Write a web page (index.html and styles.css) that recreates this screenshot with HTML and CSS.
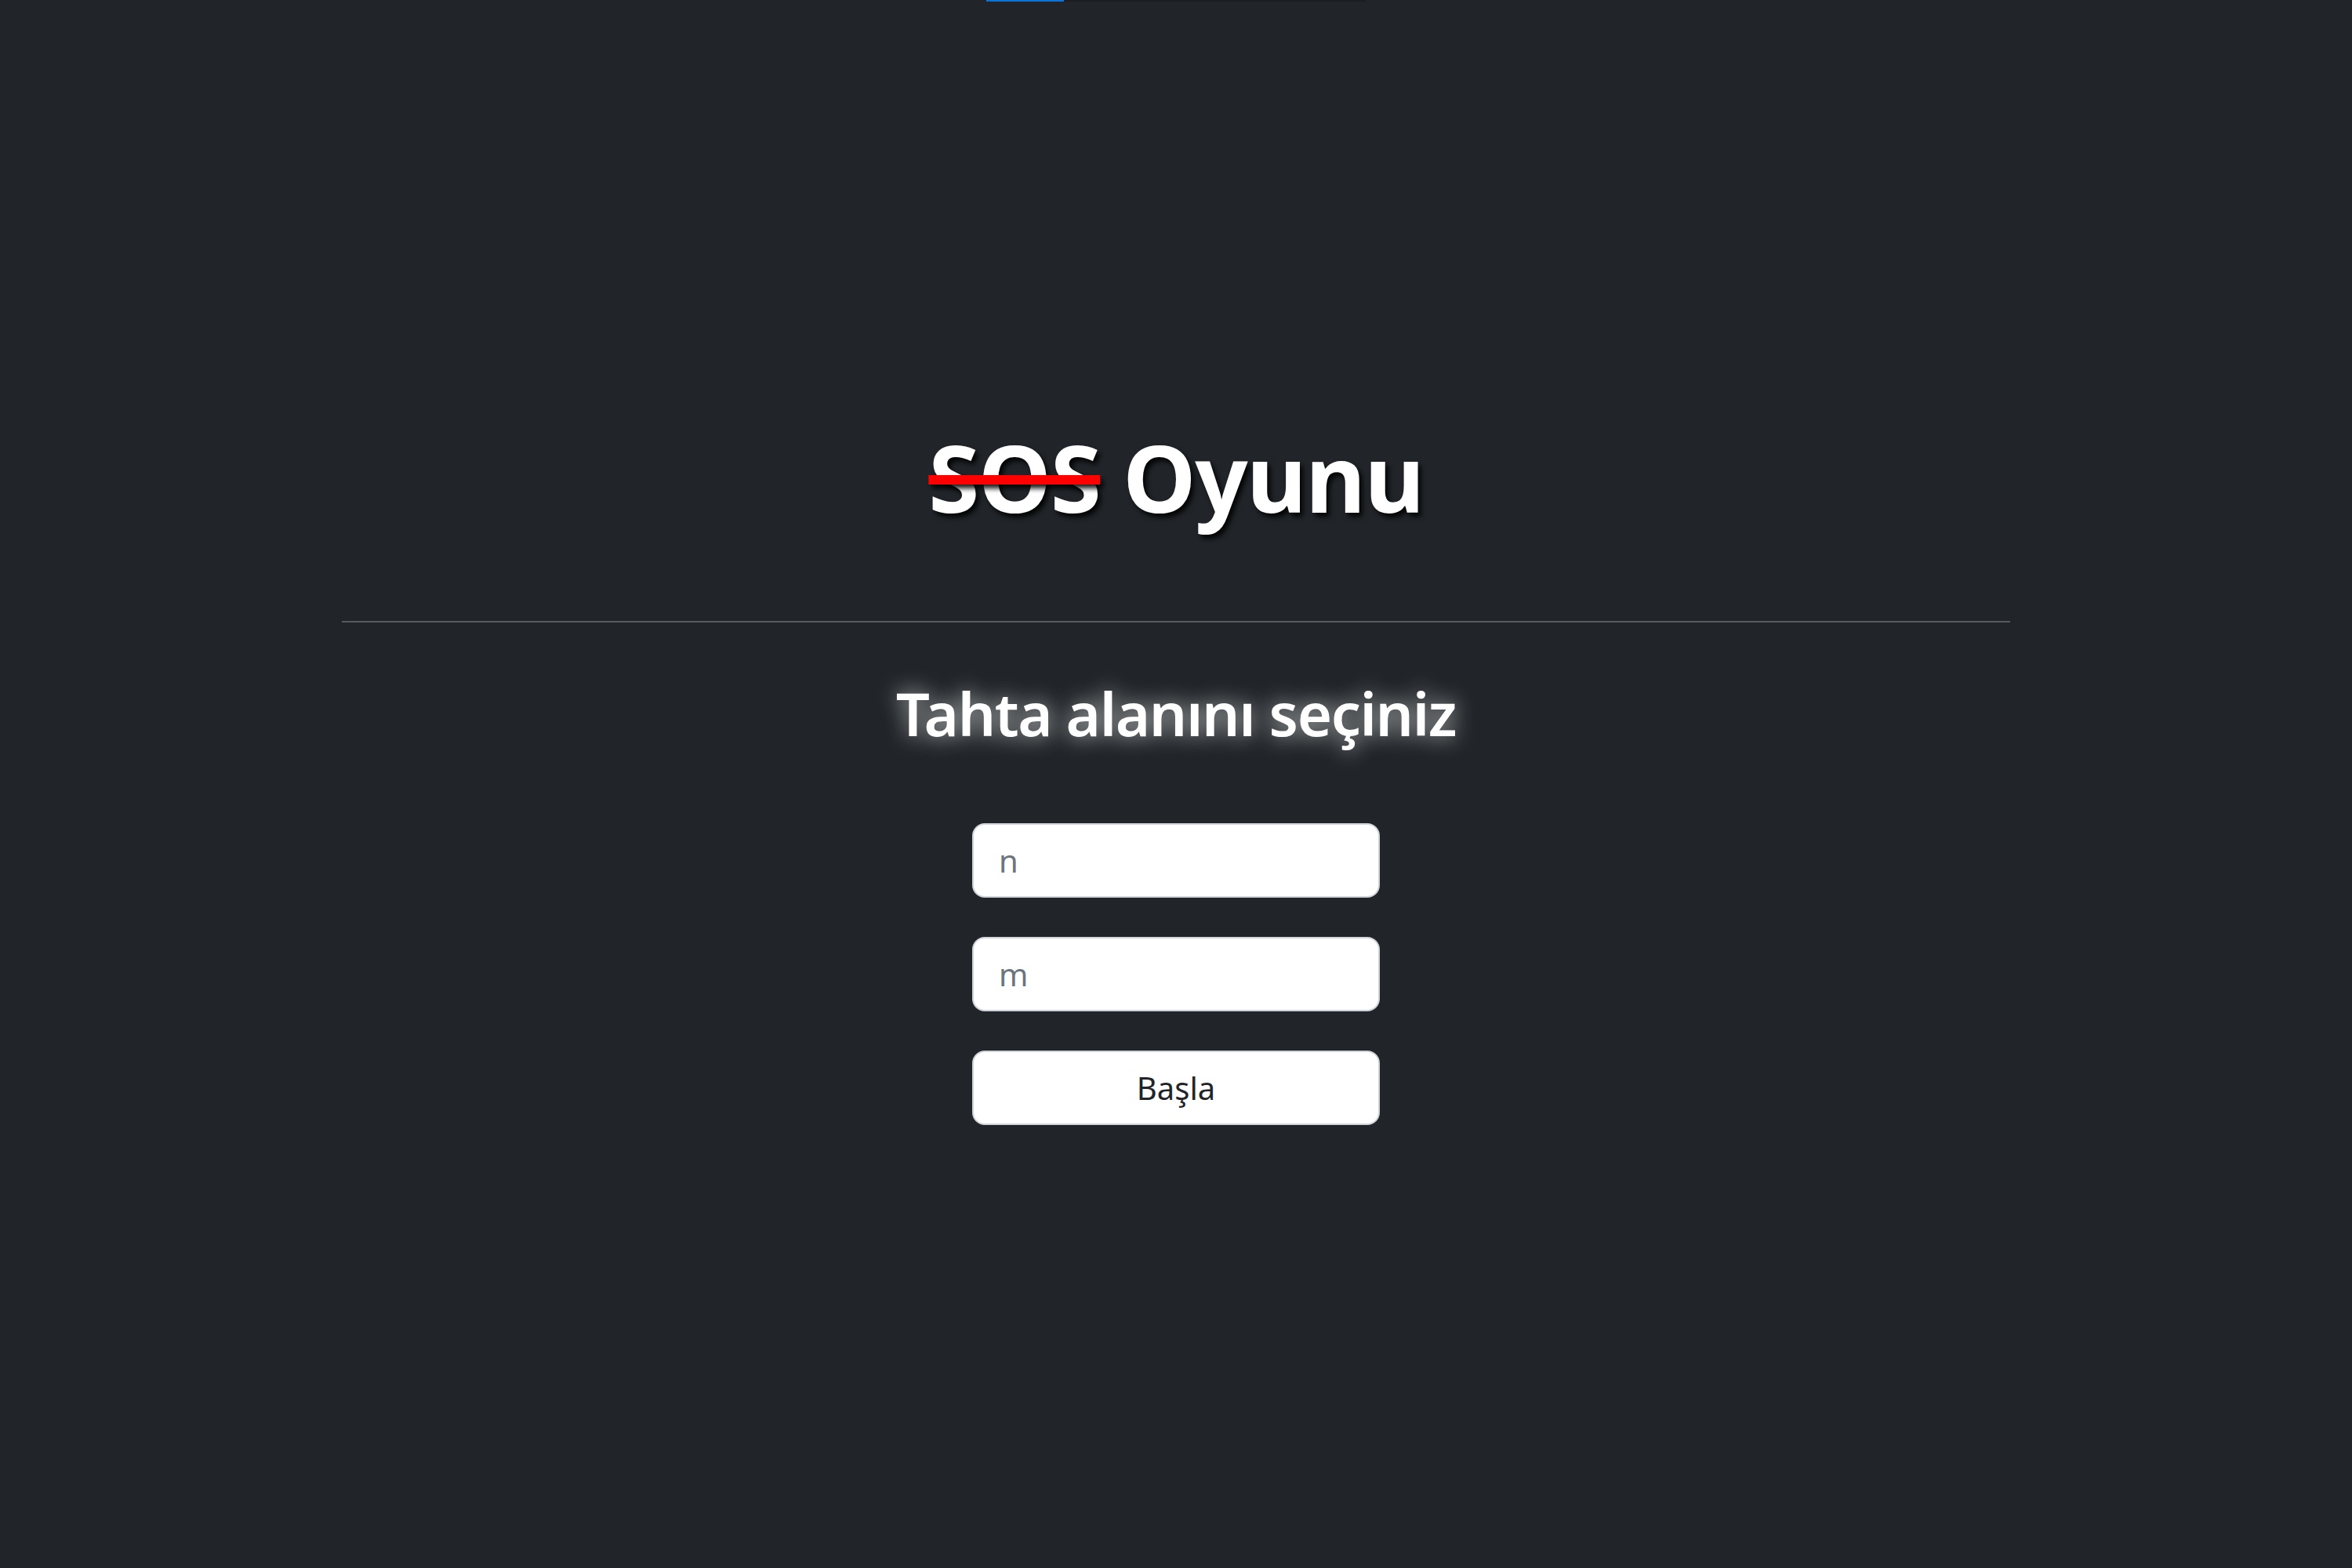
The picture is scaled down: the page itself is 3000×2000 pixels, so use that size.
FILE: index.html
```html
<!DOCTYPE html>
<html lang="tr">
<head>
<meta charset="utf-8">
<title>SOS Oyunu</title>
<link rel="stylesheet" href="styles.css">
</head>
<body>
<div class="page">
  <div class="progress"><div class="progress-bar"></div></div>
  <h1 class="title"><span class="strike">SOS</span> Oyunu</h1>
  <hr class="divider">
  <h2 class="subtitle">Tahta alanını seçiniz</h2>
  <form class="board-form">
    <input class="field" type="text" placeholder="n">
    <input class="field" type="text" placeholder="m">
    <button class="start-btn" type="button">Başla</button>
  </form>
</div>
</body>
</html>
```

FILE: styles.css
```css
html, body {
  margin: 0;
  padding: 0;
  background: #212529;
  height: 100%;
}
body {
  font-family: "Noto Sans", "Open Sans", sans-serif;
  color: #fff;
}
.page {
  display: flex;
  flex-direction: column;
  align-items: center;
}
.progress {
  width: 484px;
  height: 2px;
  background: #1b1d20;
  display: flex;
}
.progress-bar {
  width: 20.5%;
  background: #0b74da;
}
.title {
  margin: 535px 0 0;
  font-size: 118px;
  font-weight: 700;
  line-height: 144px;
  letter-spacing: -1.5px;
  color: #fff;
  text-shadow: 4px 5px 6px rgba(0, 0, 0, 0.9);
}
.strike {
  text-decoration: line-through;
  text-decoration-color: #ff0000;
  text-decoration-thickness: 12px;
}
.divider {
  width: 2128px;
  margin: 111px 0 0;
  border: 0;
  border-top: 2px solid rgba(255, 255, 255, 0.25);
  height: 0;
}
.subtitle {
  margin: 68px 0 0;
  font-size: 76px;
  font-weight: 600;
  line-height: 96px;
  letter-spacing: -1.4px;
  color: #fff;
  text-shadow: 0 0 28px rgba(255, 255, 255, 0.75);
}
.board-form {
  margin-top: 92px;
  width: 520px;
  display: flex;
  flex-direction: column;
  gap: 50px;
}
.field,
.start-btn {
  box-sizing: border-box;
  height: 95px;
  width: 100%;
  border: 2px solid #ced4da;
  border-radius: 16px;
  background: #fff;
  font-family: "Noto Sans", "Open Sans", sans-serif;
  font-size: 40px;
  color: #212529;
  margin: 0;
}
.field {
  padding: 0 32px;
  outline: none;
}
.field::placeholder {
  color: #6c757d;
}
.start-btn {
  padding: 0;
  text-align: center;
  cursor: pointer;
}
```
